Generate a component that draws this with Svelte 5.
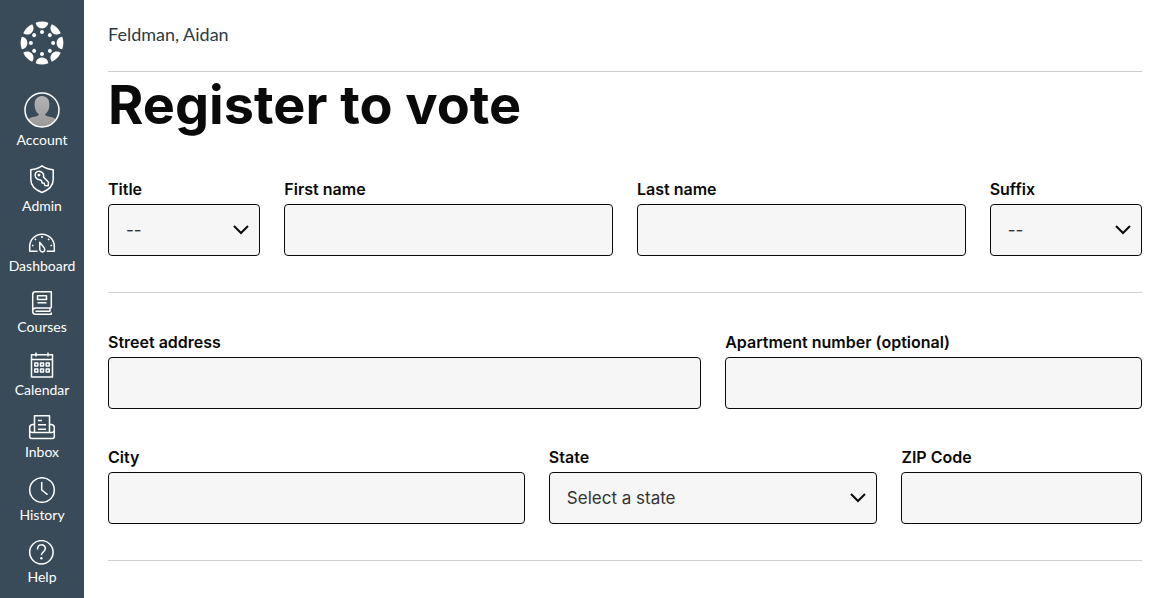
<script>
  const items = [
    { id: 'account', label: 'Account' },
    { id: 'admin', label: 'Admin' },
    { id: 'dashboard', label: 'Dashboard' },
    { id: 'courses', label: 'Courses' },
    { id: 'calendar', label: 'Calendar' },
    { id: 'inbox', label: 'Inbox' },
    { id: 'history', label: 'History' },
    { id: 'help', label: 'Help' }
  ];
  const angles = [0, 45, 90, 135, 180, 225, 270, 315];
  const rows = [11, 17];
  const columns = [6.8, 12.5, 18.2];
  let title = $state('');
  let suffix = $state('');
  let region = $state('');
</script>

{#snippet chevron()}
  <svg width="16" height="10" viewBox="0 0 16 10"><path d="M1 1L8 8L15 1" /></svg>
{/snippet}

<div class="shell">
  <nav class="sidebar" aria-label="Global">
    <a class="logo" href="#home" aria-label="Canvas">
      <svg width="44" height="44" viewBox="-22 -22 44 44" fill="#fff">
        {#each angles as angle}
          <g transform="rotate({angle})">
            <path d="M-6.3 -20.2Q0 -22.6 6.3 -20.2C5.800 -16.800 3.300 -14.600 0 -14.600C-3.300 -14.600 -5.800 -16.800 -6.300 -20.200Z" />
            <circle cy="-11.1" r="2" />
          </g>
        {/each}
      </svg>
    </a>
    {#each items as item}
      <a class="item" href="#{item.id}">
        {#if item.id === 'account'}
          <svg width="36" height="36" viewBox="0 0 36 36">
            <defs>
              <clipPath id="face"><circle cx="18" cy="18" r="17" /></clipPath>
              <linearGradient id="shade" x1="0" y1="0" x2="0" y2="1">
                <stop offset="0" stop-color="#b2b2b2" />
                <stop offset="1" stop-color="#999" />
              </linearGradient>
            </defs>
            <g clip-path="url(#face)" fill="url(#shade)">
              <path d="M18 4C13 4 10.4 7.8 10.6 13C10.8 18 12.5 20.5 14.8 22C14.8 24 13 24 9 25C5.5 26 3 27.500 1 30V36H35V30C33 27.500 30.500 26 27 25C23 24 21.200 24 21.200 22C23.500 20.500 25.200 18 25.400 13C25.600 7.800 23 4 18 4Z" />
            </g>
            <circle class="line" cx="18" cy="18" r="17" stroke-width="2" />
          </svg>
        {:else if item.id === 'admin'}
          <svg width="28" height="29" viewBox="0 0 28 29">
            <g class="line">
              <path d="M14 .8C10.500 3.400 7 4.400 2.800 4.700V14.500C2.800 20.500 7.500 25 14 27.500C20.500 25 25.200 20.500 25.200 14.500V4.700C21 4.400 17.500 3.400 14 .8Z" />
              <path d="M7.700 7.800A4.600 4.600 0 0 1 15.500 12L20.500 17.300L20.200 20.800L16.900 20.500L16.200 18.300L14.200 17.900L13.500 15.700L11.600 14.700A4.600 4.600 0 0 1 7.700 7.800Z" />
              <circle cx="11" cy="10.100" r=".7" />
            </g>
          </svg>
        {:else if item.id === 'dashboard'}
          <svg width="28" height="23" viewBox="0 0 28 23">
            <g class="line">
              <path d="M9.500 20.200H1.700V15.500A12.300 12.300 0 0 1 26.300 15.500V20.200H18.800" />
              <path d="M11.700 11.200L15.900 16.400C17.500 18.800 16.700 20.700 14.700 20.900C12.700 21 11.700 19.500 11.700 17Z" />
              <path d="M14 5V7M6.800 7.800L8 9M21.200 7.800L20 9M4 14.500H5.500M22.500 14.500H24" />
            </g>
          </svg>
        {:else if item.id === 'courses'}
          <svg width="28" height="24" viewBox="0 0 28 24">
            <g class="line">
              <path d="M23.300 17V.8H7.500Q4.700 .8 4.700 3.500V20.500Q4.700 23.200 7.500 23.200H23.300V21.500M23.300 17H7.500Q4.700 17.200 4.700 20" />
              <path d="M7.500 20.200H22.500M22 17V20M9.500 4.800H18.500V8.500H9.500ZM9.500 11.800H18.500" />
            </g>
          </svg>
        {:else if item.id === 'calendar'}
          <svg width="28" height="26" viewBox="0 0 28 26">
            <g class="line">
              <path d="M3.500 2.800H24.500V25H3.500ZM3.500 7.500H24.500" />
              <path d="M8 .5V4.500M20 .5V4.500" />
              {#each rows as y}
                {#each columns as x}
                  <rect {x} {y} width="3" height="3" />
                {/each}
              {/each}
            </g>
          </svg>
        {:else if item.id === 'inbox'}
          <svg width="28" height="25" viewBox="0 0 28 25">
            <g class="line">
              <path d="M6.500 17V.8H21.500V17M10 5.500H14M10 9.800H18M10 14.200H18" />
              <path d="M6.500 9.500H4.500Q1.700 10 1.700 12.500V21.500Q1.700 23.500 3.700 23.500H24.300Q26.300 23.500 26.300 21.500V12.500Q26.300 10 23.500 9.500H21.500" />
              <path d="M1.700 15.500Q2 17.600 4.500 17.600H23.500Q26 17.600 26.300 15.500" />
            </g>
          </svg>
        {:else if item.id === 'history'}
          <svg width="28" height="26" viewBox="0 0 28 26">
            <g class="line">
              <circle cx="14" cy="13" r="12.300" />
              <path d="M13.700 5V13L19.500 17.700" />
            </g>
          </svg>
        {:else}
          <svg width="28" height="25" viewBox="0 0 28 25">
            <g class="line">
              <circle cx="13.400" cy="12.300" r="11.700" />
              <path d="M9.500 9.500C9.500 3.200 17.500 3.700 17.300 8.800C17.200 12 13.400 11.800 13.400 15.200" />
            </g>
            <circle cx="13.400" cy="18.300" r="1.200" fill="#fff" />
          </svg>
        {/if}
        <span>{item.label}</span>
      </a>
    {/each}
  </nav>

  <main>
    <header><a href="#person">Feldman, Aidan</a></header>
    <h1>Register to vote</h1>
    <form>
      <section class="names">
        <div class="field two">
          <label for="title">Title</label>
          <div class="choice">
            <select id="title" bind:value={title}><option value="">--</option></select>
            {@render chevron()}
          </div>
        </div>
        <div class="field four">
          <label for="first">First name</label>
          <input id="first" type="text" />
        </div>
        <div class="field four">
          <label for="last">Last name</label>
          <input id="last" type="text" />
        </div>
        <div class="field two">
          <label for="suffix">Suffix</label>
          <div class="choice">
            <select id="suffix" bind:value={suffix}><option value="">--</option></select>
            {@render chevron()}
          </div>
        </div>
      </section>
      <section class="address">
        <div class="field seven">
          <label for="street">Street address</label>
          <input id="street" type="text" />
        </div>
        <div class="field five">
          <label for="apartment">Apartment number (optional)</label>
          <input id="apartment" type="text" />
        </div>
        <div class="field five">
          <label for="city">City</label>
          <input id="city" type="text" />
        </div>
        <div class="field four">
          <label for="state">State</label>
          <div class="choice">
            <select id="state" bind:value={region}><option value="">Select a state</option></select>
            {@render chevron()}
          </div>
        </div>
        <div class="field three">
          <label for="zip">ZIP Code</label>
          <input id="zip" type="text" />
        </div>
      </section>
    </form>
  </main>
</div>

<style>
  :global(body) {
    margin: 0;
    background: #fff;
  }
  .shell {
    display: flex;
    min-height: 100vh;
    font-family: Inter, sans-serif;
    color: #0a0a0a;
  }
  .sidebar {
    flex: 0 0 84px;
    box-sizing: border-box;
    padding: 21px 0 12px;
    display: flex;
    flex-direction: column;
    gap: 16px;
    background: #394b58;
    font: 14px/18px Lato, sans-serif;
  }
  .logo {
    display: flex;
    justify-content: center;
    margin-bottom: 11px;
  }
  .item {
    display: flex;
    flex-direction: column;
    align-items: center;
    gap: 3px;
    color: #fff;
    text-decoration: none;
  }
  svg {
    display: block;
  }
  .line {
    fill: none;
    stroke: #fff;
    stroke-width: 1.5;
    stroke-linejoin: round;
  }
  main {
    flex: 1;
    min-width: 0;
    padding: 0 24px;
  }
  header {
    padding: 22px 0 25px;
    border-bottom: 1px solid #c7cdd1;
    font: 18px/24px Lato, sans-serif;
  }
  header a {
    color: #2d3b45;
    text-decoration: none;
  }
  h1 {
    margin: 0;
    padding-bottom: 42px;
    font-size: 54px;
    line-height: 66px;
    font-weight: 700;
  }
  section {
    display: grid;
    grid-template-columns: repeat(12, minmax(0, 1fr));
    gap: 39px 24px;
    padding-bottom: 36px;
    border-bottom: 1px solid #d0d0d0;
  }
  .address {
    padding-top: 40px;
  }
  .two { grid-column: span 2; }
  .three { grid-column: span 3; }
  .four { grid-column: span 4; }
  .five { grid-column: span 5; }
  .seven { grid-column: span 7; }
  label {
    display: block;
    padding-bottom: 6px;
    font-size: 16px;
    line-height: 18px;
    font-weight: 600;
  }
  input,
  select {
    display: block;
    box-sizing: border-box;
    width: 100%;
    height: 52px;
    margin: 0;
    padding: 0 17px;
    border: 1px solid #0a0a0a;
    border-radius: 4px;
    background: #f6f6f6;
    color: #333;
    font: 17px/24px Inter, sans-serif;
    appearance: none;
  }
  .choice {
    display: grid;
    align-items: center;
  }
  .choice > * {
    grid-area: 1 / 1;
  }
  .choice svg {
    justify-self: end;
    margin-right: 11px;
    fill: none;
    stroke: #0a0a0a;
    stroke-width: 2;
    pointer-events: none;
  }
</style>
